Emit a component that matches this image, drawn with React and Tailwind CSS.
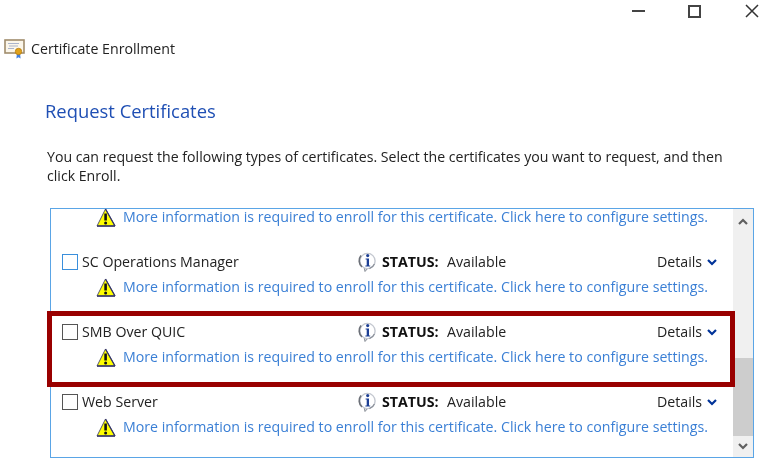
import React from 'react';

// Small certificate with a gold seal, from the window title bar
const CertIcon = () => (
    <svg width="21" height="20" viewBox="0 0 21 20" className="shrink-0">
        <rect x="1" y="1" width="19" height="13" fill="#fbf6ea" stroke="#a08c6c" strokeWidth="1.6" />
        <path d="M4 4.5h11M5 7h9M4 9.5h6" stroke="#aab4cc" strokeWidth="1" />
        <path d="M13 14l-.6 5.5 2.1-1.3 2.1 1.3-.6-5.5z" fill="#3f7fe0" />
        <circle cx="14.5" cy="12.5" r="3.2" fill="#e0a21c" stroke="#b57c10" strokeWidth="0.8" />
    </svg>
);

const WarnIcon = () => (
    <svg width="20" height="19" viewBox="0 0 20 19" className="shrink-0">
        <path d="M9.5 1L19 18H1z" fill="#ffff00" stroke="#5a5a70" strokeWidth="1" strokeLinejoin="round" />
        <path d="M19 18H1M9.5 1L19 18" stroke="#34346a" strokeWidth="1.3" fill="none" />
        <path d="M9.6 5.5v7" stroke="#111" strokeWidth="2.6" />
        <circle cx="9.6" cy="15" r="1.5" fill="#111" />
    </svg>
);

const InfoIcon = () => (
    <svg width="21" height="20" viewBox="0 0 21 20" className="shrink-0">
        <path d="M7 15l1 4.5 3-3.5" fill="#d8dade" stroke="#8a8f98" strokeWidth="1" />
        <circle cx="10.5" cy="9" r="7.6" fill="#ffffff" stroke="#c4c8d0" strokeWidth="1.4" />
        <path d="M4 3.5a8.4 8.4 0 0 0 1 11.5" fill="none" stroke="#6c7078" strokeWidth="1.6" />
        <path d="M17.4 12a8 8 0 0 1-5 4.6" fill="none" stroke="#8a8f98" strokeWidth="1.2" />
        <circle cx="10.7" cy="3.6" r="1.6" fill="#1c3f94" />
        <path d="M8.6 6.4h3.4v7h1.2v1.2H8.4v-1.2h1.3V7.6H8.6z" fill="#1c3f94" />
    </svg>
);

const Chevron = ({ up, color = '#003399' }) => (
    <svg width="10" height="7" viewBox="0 0 10 7" className="shrink-0">
        <path d={up ? 'M1 6l4-4 4 4' : 'M1 1l4 4 4-4'} fill="none" stroke={color} strokeWidth="2.2" />
    </svg>
);

const WarnLine = () => (
    <div className="flex h-4 items-center pl-[45px]">
        <WarnIcon />
        <span className="ml-[7px] whitespace-nowrap text-[14.2px] leading-4 text-[#3a7fd5]">
            More information is required to enroll for this certificate. Click here to configure settings.
        </span>
    </div>
);

const CertRow = ({ name, focused }) => (
    <div className="mb-[27px] last:mb-0">
        <div className="flex h-5 items-center pl-[11px]">
            <span className={`h-4 w-4 shrink-0 border ${focused ? 'border-[#3a8fdc]' : 'border-[#555555]'}`} />
            <span className="ml-1 w-[275px] whitespace-nowrap text-[14.2px] text-[#222222]">{name}</span>
            <InfoIcon />
            <span className="ml-1 w-[58px] whitespace-nowrap text-[14.2px] font-bold text-[#111111]">STATUS:</span>
            <span className="ml-[7px] w-[210px] text-[14.2px] text-[#222222]">Available</span>
            <span className="w-[45px] text-[14.2px] text-[#222222]">Details</span>
            <span className="ml-[5px]"><Chevron /></span>
        </div>
        <div className="mt-[7px]"><WarnLine /></div>
    </div>
);

export default function App() {
    return (
        <div className="relative flex h-[464px] w-[781px] flex-col overflow-hidden bg-white font-['Open_Sans',sans-serif] blur-[0.3px]">
            {/* window buttons */}
            <div className="flex h-[22px] items-center justify-end gap-[43px] pr-[22px]">
                <span className="h-[2px] w-[13px] bg-[#444444]" />
                <span className="h-[13px] w-[13px] border-2 border-[#444444]" />
                <svg width="14" height="14" viewBox="0 0 14 14" className="ml-px">
                    <path d="M1 1l12 12M13 1L1 13" stroke="#333" strokeWidth="1.5" />
                </svg>
            </div>

            {/* title */}
            <div className="mt-[17px] flex h-5 items-center pl-[4px]">
                <CertIcon />
                <span className="ml-[6px] text-[14.2px] text-[#222222]">Certificate Enrollment</span>
            </div>

            <h1 className="mt-[38px] pl-[45px] text-[18.4px] leading-[28px] text-[#1f4fb4]">Request Certificates</h1>

            <p className="mt-[22px] w-[735px] pl-[47px] text-[14.13px] leading-[19px] text-[#222222]">
                You can request the following types of certificates. Select the certificates you want to request, and then click Enroll.
            </p>

            {/* certificate list */}
            <div className="ml-[50px] mt-[23px] flex h-[250px] w-[704px] border border-[#5aa5e6]">
                <div className="min-w-0 flex-1">
                    <div className="mb-[27px]"><WarnLine /></div>
                    <CertRow name="SC Operations Manager" focused />
                    <CertRow name="SMB Over QUIC" />
                    <CertRow name="Web Server" />
                </div>
                <div className="flex w-5 flex-col bg-[#f0f0f0]">
                    <div className="flex h-[17px] items-center justify-center pt-[8px]"><Chevron up color="#606060" /></div>
                    <div className="mt-[132px] h-[78px] bg-[#cdcdcd]" />
                    <div className="flex flex-1 items-center justify-center"><Chevron color="#606060" /></div>
                </div>
            </div>

            {/* red highlight drawn over the list */}
            <div className="absolute left-[47px] top-[311px] h-[76px] w-[688px] border-[5px] border-[#990000]" />
        </div>
    );
}
